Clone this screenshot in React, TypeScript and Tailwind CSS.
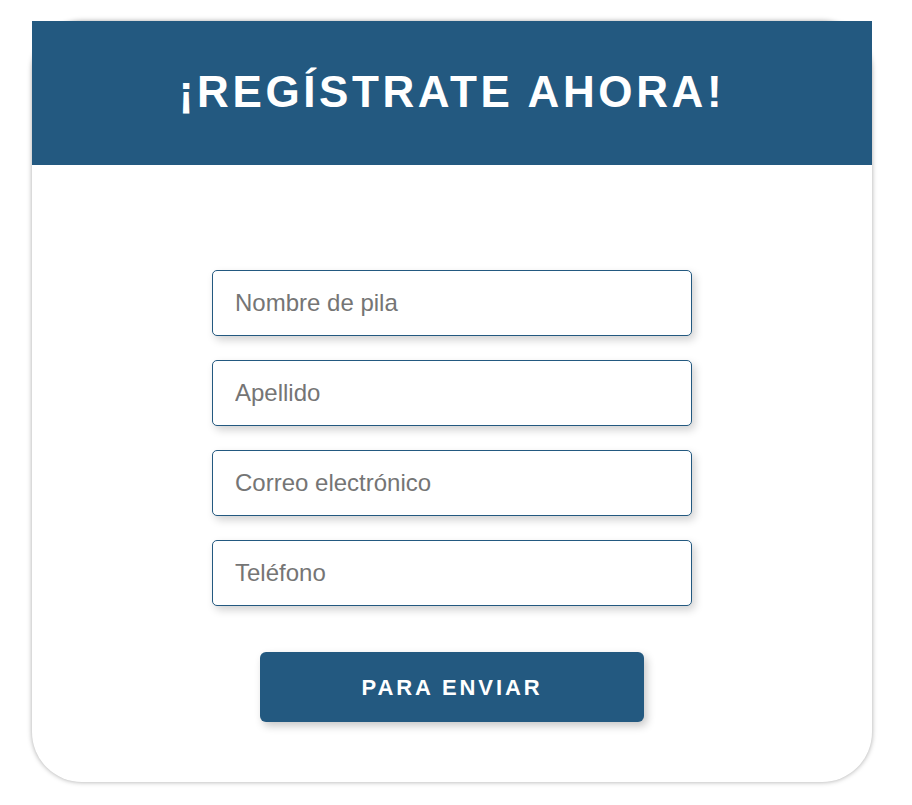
export default function App() {
  const campos = ['Nombre de pila', 'Apellido', 'Correo electrónico', 'Teléfono'];

  return (
    <div className="min-h-screen bg-white pt-[21px] px-[32px] font-['Liberation_Sans',Arial,sans-serif]">
      <div className="w-[840px] bg-white rounded-[50px] shadow-[0_0_5px_rgba(0,0,0,0.35)] pb-[60px]">
        {/* Encabezado */}
        <div className="h-[144px] bg-[#235980] flex items-center justify-center">
          <h1 className="text-white font-bold text-[44px] tracking-[3.6px] leading-none -mt-[2px]">
            ¡REGÍSTRATE AHORA!
          </h1>
        </div>

        {/* Formulario */}
        <form className="flex flex-col items-center pt-[105px]" onSubmit={(e) => e.preventDefault()}>
          <div className="flex flex-col gap-[24px]">
            {campos.map((c) => (
              <input
                key={c}
                type="text"
                placeholder={c}
                className="w-[480px] h-[66px] border border-[#235980] rounded-[5px] bg-white px-[22px] text-[24px] text-[#333] placeholder:text-[#757575] shadow-[3px_4px_9px_rgba(0,0,0,0.18)] outline-none"
              />
            ))}
          </div>
          <button
            type="submit"
            className="mt-[46px] w-[384px] h-[70px] bg-[#235980] text-white font-bold text-[22px] tracking-[2.9px] rounded-[6px] shadow-[3px_4px_9px_rgba(0,0,0,0.22)]"
          >
            PARA ENVIAR
          </button>
        </form>
      </div>
    </div>
  );
}
